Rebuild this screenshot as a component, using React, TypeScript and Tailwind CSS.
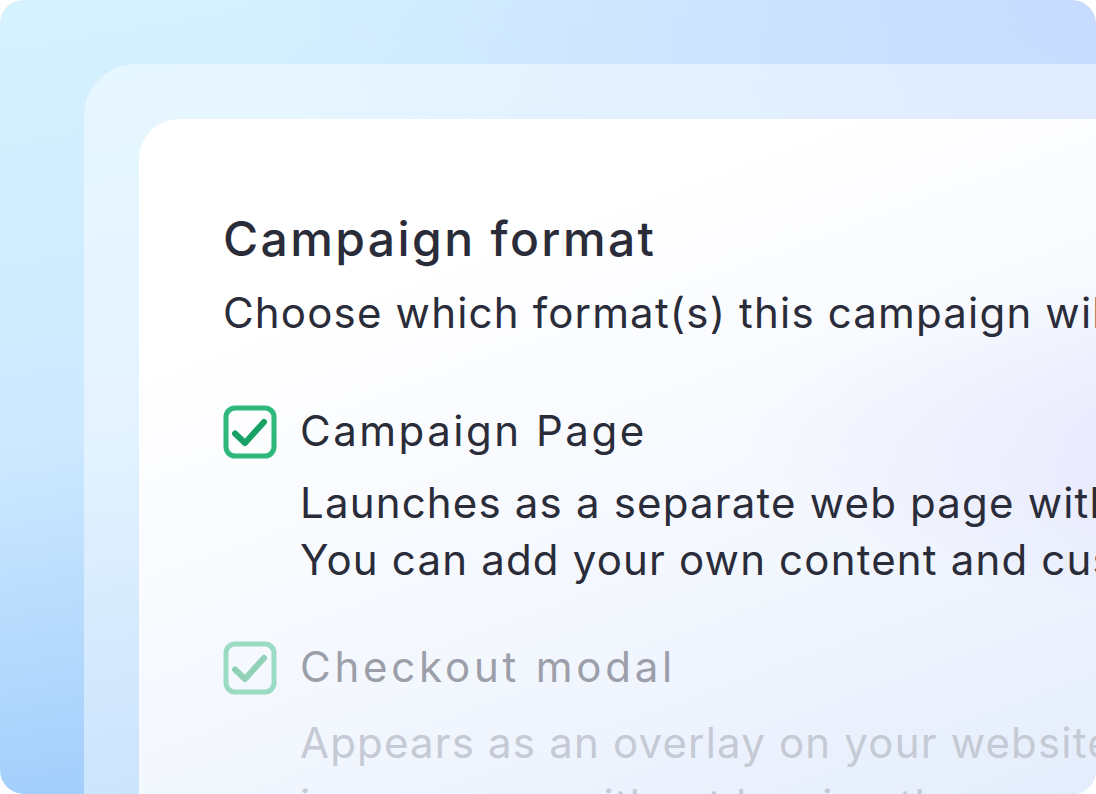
import React from "react";

function Check({ faded }: { faded?: boolean }) {
  return (
    <svg
      width="54"
      height="54"
      viewBox="0 0 54 54"
      className={faded ? "opacity-45 shrink-0" : "shrink-0"}
    >
      <rect x="3" y="3" width="48" height="48" rx="9" fill="none" stroke="#2fb87c" strokeWidth="5" />
      <path d="M12 28.5 L22 38 L41 17" fill="none" stroke="#17a265" strokeWidth="6" strokeLinecap="round" strokeLinejoin="round" />
    </svg>
  );
}

export default function App() {
  const font = "font-['Inter',_'Noto_Sans',_sans-serif]";
  return (
    <div className="w-[1096px] h-[794px] overflow-hidden">
      <div
        className={`w-[1096px] h-[794px] rounded-[24px] overflow-hidden flex pl-[84px] pt-[64px] bg-[radial-gradient(ellipse_at_100%_0%,#c7dbff_0%,rgba(199,219,255,0)_55%),linear-gradient(170deg,#d5f2ff_0%,#cde9ff_45%,#8ec1fa_100%)] ${font}`}
      >
        <div className="flex-1 flex rounded-tl-[52px] bg-white/45 pl-[55px] pt-[55px]">
          <div className="flex-1 rounded-tl-[40px] overflow-hidden bg-[radial-gradient(ellipse_at_100%_48%,#dcd9fd_0%,rgba(223,220,253,0)_42%),linear-gradient(160deg,#ffffff_20%,#f3f7fe_55%,#dce8fc_100%)] pl-[84px] pt-[92px]">
            <div className="w-[1400px] whitespace-nowrap">
              <div className="text-[48px] leading-[56px] font-medium text-[#2a2c39] tracking-[0.05em]">
                Campaign format
              </div>
              <div className="mt-[18px] text-[42px] leading-[56px] text-[#2a2c39] tracking-[0.028em]">
                Choose which format(s) this campaign will use for supporters
              </div>

              <div className="mt-[62px] flex items-start gap-[23px]">
                <div className="mt-[2px]">
                  <Check />
                </div>
                <div>
                  <div className="text-[42px] leading-[56px] text-[#2a2c39] tracking-[0.06em]">
                    Campaign Page
                  </div>
                  <div className="mt-[15px] text-[42px] leading-[57px] text-[#2a2c39] tracking-[0.028em]">
                    <div>Launches as a separate web page with its own link.</div>
                    <div>You can add your own content and customise it.</div>
                  </div>
                </div>
              </div>

              <div className="mt-[51px] flex items-start gap-[23px]">
                <div className="mt-[2px]">
                  <Check faded />
                </div>
                <div>
                  <div className="text-[42px] leading-[56px] text-[#9c9fa9] tracking-[0.09em]">
                    Checkout modal
                  </div>
                  <div className="mt-[17px] text-[42px] leading-[62px] text-[#c5cad4] tracking-[0.028em]">
                    <div>Appears as an overlay on your website so people</div>
                    <div>in a pop-up, without leaving the page they are on.</div>
                  </div>
                </div>
              </div>
            </div>
          </div>
        </div>
      </div>
    </div>
  );
}
